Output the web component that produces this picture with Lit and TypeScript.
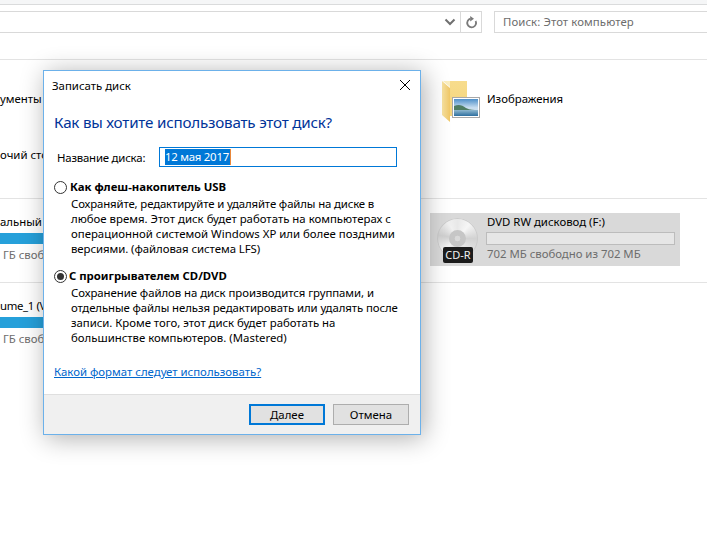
import { LitElement, html, css, svg } from "lit";
import { customElement } from "lit/decorators.js";

const folderIcon = svg`<svg class="folder-svg" width="40" height="42" viewBox="0 0 40 42">
  <defs>
    <linearGradient id="fb" x1="0" y1="0" x2="0" y2="1"><stop offset="0" stop-color="#f7dc8c"/><stop offset="1" stop-color="#f4d57c"/></linearGradient>
    <linearGradient id="ff" x1="0" y1="0" x2="1" y2="0"><stop offset="0" stop-color="#f8e3a2"/><stop offset="1" stop-color="#f0c766"/></linearGradient>
    <linearGradient id="sky" x1="0" y1="0" x2="0" y2="1"><stop offset="0" stop-color="#4d8fc9"/><stop offset=".5" stop-color="#c6dcef"/><stop offset="1" stop-color="#dbe8f2"/></linearGradient>
    <linearGradient id="sea" x1="0" y1="0" x2="0" y2="1"><stop offset="0" stop-color="#8fb8cf"/><stop offset="1" stop-color="#2e6f9f"/></linearGradient>
  </defs>
  <path d="M8 0h17v35H8z" fill="url(#fb)"/>
  <path d="M0 0l8 7v34L0 34z" fill="url(#ff)"/>
  <path d="M1 0h7v6z" fill="#fbeebf"/>
  <rect x="10.5" y="16.5" width="27" height="20" fill="#fff" stroke="#a8a8a8"/>
  <rect x="12" y="18" width="24" height="17" fill="url(#sky)"/>
  <path d="M12 25c5-2 8-1 12 2 4 2 8 2 12 2v6H12z" fill="#4f7d63"/>
  <rect x="12" y="29" width="24" height="6" fill="url(#sea)"/>
</svg>`;

@customElement("app-root")
export class AppRoot extends LitElement {
  static styles = css`
    :host {
      display: block;
      position: relative;
      width: 707px;
      height: 536px;
      overflow: hidden;
      background: #fff;
      font-family: "Noto Sans", "Open Sans", sans-serif;
      font-size: 11.4px;
      color: #000;
    }
    .topstrip {
      height: 4px;
      background: #f5f6f7;
      border-bottom: 1px solid #dadbdc;
    }
    .navrow {
      display: flex;
      height: 22px;
      margin-top: 6px;
      box-sizing: border-box;
    }
    .address {
      width: 482px;
      box-sizing: border-box;
      border: 1px solid #d9d9d9;
      border-left: 0;
      display: flex;
      justify-content: flex-end;
    }
    .addr-btn {
      width: 20px;
      display: flex;
      align-items: center;
      justify-content: center;
    }
    .addr-btn.sep {
      border-left: 1px solid #d9d9d9;
    }
    .search {
      margin-left: 12px;
      flex: 1;
      box-sizing: border-box;
      border: 1px solid #d9d9d9;
      border-right: 0;
      padding-left: 8px;
      line-height: 19px;
      letter-spacing: 0.08px;
      color: #6d6d6d;
    }
    .rule {
      height: 1px;
      background: #e3e3e3;
    }
    .rule.first {
      margin-top: 26px;
    }
    .folders {
      height: 138px;
      display: flex;
      justify-content: space-between;
    }
    .left-col {
      white-space: nowrap;
      line-height: 15px;
    }
    .doc {
      margin-top: 31px;
    }
    .desk {
      margin-top: 41px;
    }
    .folder-tile {
      width: 265px;
      display: flex;
      gap: 5px;
      padding-top: 21px;
      box-sizing: border-box;
    }
    .folder-svg {
      display: block;
      flex: none;
    }
    .folder-name {
      line-height: 15px;
      padding-top: 10px;
    }
    .drives {
      height: 83px;
      display: flex;
    }
    .drive-left {
      width: 140px;
      white-space: nowrap;
      padding-top: 15px;
      line-height: 15px;
    }
    .volume {
      letter-spacing: -0.35px;
    }
    .dl-bar {
      height: 11px;
      margin: 4px 0 3px;
      background: #26a0da;
    }
    .dl-free {
      margin-left: 3px;
      color: #6d6d6d;
    }
    .dvd {
      margin: 14px 0 0 290px;
      width: 250px;
      height: 53px;
      background: #d9d9d9;
      display: flex;
      box-sizing: border-box;
      padding-left: 7px;
    }
    .disc-wrap {
      width: 49px;
      flex: none;
      position: relative;
    }
    .disc {
      position: absolute;
      left: 0;
      top: 5px;
      width: 41px;
      height: 41px;
      border-radius: 50%;
      background: conic-gradient(#e8e8e8, #f6f6f6 40deg, #d2d2d2 90deg, #e6e6e6 140deg, #d6d6d6 190deg, #f3f3f3 230deg, #d0d0d0 280deg, #f0f0f0 330deg, #e8e8e8);
      box-shadow: inset 0 0 0 1px #cbcbcb;
    }
    .hole {
      position: absolute;
      left: 12px;
      top: 12px;
      width: 17px;
      height: 17px;
      border-radius: 50%;
      background: radial-gradient(circle, #d9d9d9 0 22%, #c6c6c6 26% 92%, #dcdcdc 100%);
    }
    .badge {
      position: absolute;
      left: 6px;
      top: 34px;
      width: 30px;
      height: 16px;
      border-radius: 2px;
      background: #1c1c1c;
      color: #f0f0f0;
      font-size: 11px;
      line-height: 16px;
      text-align: center;
    }
    .dvd-info {
      flex: 1;
      padding-right: 5px;
    }
    .dvd-name {
      line-height: 15px;
      margin-top: 1px;
      padding-left: 1px;
    }
    .dvd-bar {
      height: 13px;
      box-sizing: border-box;
      margin-top: 3px;
      background: #e6e6e6;
      border: 1px solid #bcbcbc;
    }
    .dvd-free {
      line-height: 15px;
      margin-top: 1px;
      padding-left: 1px;
      letter-spacing: -0.02px;
      color: #6d6d6d;
    }

    .dialog {
      position: absolute;
      left: 43px;
      top: 70px;
      width: 378px;
      height: 365px;
      box-sizing: border-box;
      background: #fff;
      border: 1px solid #6cb1ea;
      box-shadow: 3px 3px 24px rgba(0, 0, 0, 0.32);
      display: flex;
      flex-direction: column;
    }
    .titlebar {
      height: 30px;
      flex: none;
      box-sizing: border-box;
      display: flex;
      align-items: center;
      justify-content: space-between;
      padding: 0 10px 2px 8px;
    }
    .close {
      display: block;
    }
    .body {
      flex: 1;
      padding-left: 10px;
    }
    h1 {
      margin: 11px 0 0;
      font-weight: 400;
      font-size: 15.2px;
      letter-spacing: -0.21px;
      line-height: 20px;
      color: #003399;
    }
    .name-row {
      display: flex;
      align-items: center;
      margin-top: 15px;
      padding-left: 3px;
    }
    .name-label {
      width: 102px;
      flex: none;
      letter-spacing: -0.2px;
    }
    .input {
      width: 238px;
      height: 20px;
      box-sizing: border-box;
      border: 1px solid #0078d7;
      padding: 1px 0 1px 5px;
      display: flex;
    }
    .selected {
      background: #0078d7;
      color: #fff;
      line-height: 16px;
      letter-spacing: -0.25px;
      padding-right: 1px;
      border-right: 1px solid #e8873a;
    }
    .option {
      display: flex;
      align-items: flex-start;
      gap: 3px;
      margin-top: 12px;
      line-height: 15px;
      font-weight: 700;
      letter-spacing: -0.03px;
    }
    .option.two {
      gap: 2px;
    }
    .radio {
      width: 13px;
      height: 13px;
      box-sizing: border-box;
      margin-top: 2px;
      flex: none;
      border: 1px solid #333;
      border-radius: 50%;
      background: #fff;
      display: flex;
      align-items: center;
      justify-content: center;
    }
    .dot {
      width: 7px;
      height: 7px;
      border-radius: 50%;
      background: #333;
    }
    .desc {
      margin: 2px 0 0 17px;
      line-height: 15px;
      white-space: nowrap;
    }
    .l1 { letter-spacing: -0.14px; }
    .l2 { letter-spacing: -0.06px; }
    .l3 { letter-spacing: -0.09px; }
    .l4 { letter-spacing: -0.04px; }
    .link {
      display: inline-block;
      margin-top: 19px;
      line-height: 16px;
      color: #0066cc;
      text-decoration: underline;
    }
    .footer {
      flex: none;
      height: 40px;
      box-sizing: border-box;
      background: #f0f0f0;
      border-top: 1px solid #dfdfdf;
      display: flex;
      justify-content: flex-end;
      gap: 8px;
      padding: 9px 11px 0 0;
    }
    .btn {
      width: 76px;
      height: 21px;
      box-sizing: border-box;
      background: #e1e1e1;
      border: 1px solid #adadad;
      text-align: center;
      line-height: 19px;
    }
    .btn.default {
      border: 2px solid #0078d7;
      line-height: 17px;
    }
  `;

  render() {
    return html`
      <div class="topstrip"></div>
      <div class="navrow">
        <div class="address">
          <div class="addr-btn">
            <svg width="12" height="8" viewBox="0 0 12 8"><path d="M1.5 1.5L6 6l4.5-4.5" fill="none" stroke="#707070" stroke-width="2"/></svg>
          </div>
          <div class="addr-btn sep">
            <svg width="13" height="13" viewBox="0 0 13 13"><path d="M10.6 5A4.4 4.4 0 1 1 5.4 2.7" fill="none" stroke="#7a7a7a" stroke-width="1.8"/><path d="M5.2 0v5.4L9 2.7z" fill="#7a7a7a"/></svg>
          </div>
        </div>
        <div class="search">Поиск: Этот компьютер</div>
      </div>
      <div class="rule first"></div>
      <div class="folders">
        <div class="left-col">
          <div class="doc">ументы</div>
          <div class="desk">очий стол</div>
        </div>
        <div class="folder-tile">
          ${folderIcon}
          <div class="folder-name">Изображения</div>
        </div>
      </div>
      <div class="rule"></div>
      <div class="drives">
        <div class="drive-left">
          <div>альный диск</div>
          <div class="dl-bar"></div>
          <div class="dl-free">ГБ свободно</div>
        </div>
        <div class="dvd">
          <div class="disc-wrap">
            <div class="disc"><div class="hole"></div></div>
            <div class="badge">CD-R</div>
          </div>
          <div class="dvd-info">
            <div class="dvd-name">DVD RW дисковод (F:)</div>
            <div class="dvd-bar"></div>
            <div class="dvd-free">702 МБ свободно из 702 МБ</div>
          </div>
        </div>
      </div>
      <div class="rule"></div>
      <div class="drives">
        <div class="drive-left">
          <div class="volume">ume_1 (V:)</div>
          <div class="dl-bar"></div>
          <div class="dl-free">ГБ свободно</div>
        </div>
      </div>

      <div class="dialog">
        <div class="titlebar">
          <span>Записать диск</span>
          <svg class="close" width="10" height="10" viewBox="0 0 10 10"><path d="M0 0l10 10M10 0L0 10" stroke="#000" stroke-width="1" fill="none"/></svg>
        </div>
        <div class="body">
          <h1>Как вы хотите использовать этот диск?</h1>
          <div class="name-row">
            <div class="name-label">Название диска:</div>
            <div class="input"><span class="selected">12 мая 2017</span></div>
          </div>
          <div class="option"><span class="radio"></span>Как флеш-накопитель USB</div>
          <div class="desc"><span class="l1">Сохраняйте, редактируйте и удаляйте файлы на диске в</span><br />любое время. Этот диск будет работать на компьютерах с<br />операционной системой Windows XP или более поздними<br /><span class="l2">версиями. (файловая система LFS)</span></div>
          <div class="option two"><span class="radio"><span class="dot"></span></span>С проигрывателем CD/DVD</div>
          <div class="desc"><span class="l2">Сохранение файлов на диск производится группами, и</span><br /><span class="l3">отдельные файлы нельзя редактировать или удалять после</span><br /><span class="l4">записи. Кроме того, этот диск будет работать на</span><br />большинстве компьютеров. (Mastered)</div>
          <a class="link">Какой формат следует использовать?</a>
        </div>
        <div class="footer">
          <div class="btn default">Далее</div>
          <div class="btn">Отмена</div>
        </div>
      </div>
    `;
  }
}
